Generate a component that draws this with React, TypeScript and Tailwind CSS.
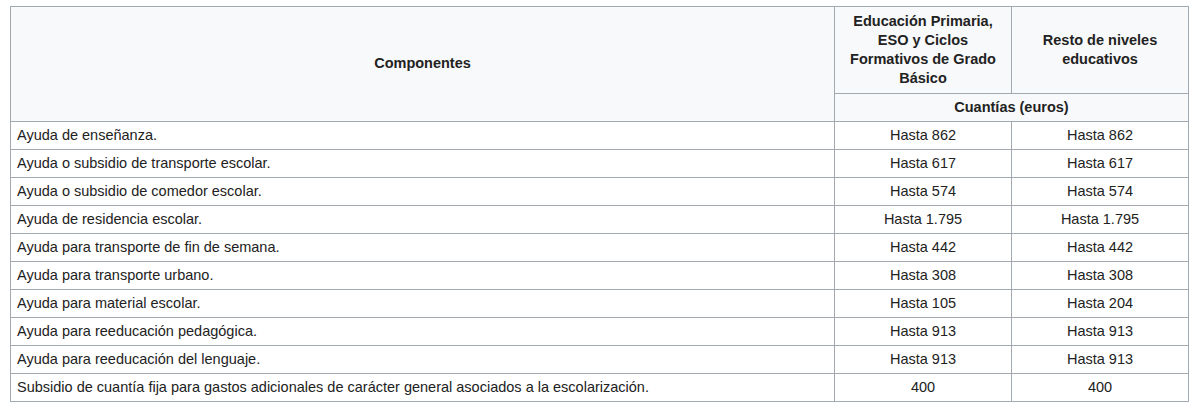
const rows: [string, string, string][] = [
  ["Ayuda de enseñanza.", "Hasta 862", "Hasta 862"],
  ["Ayuda o subsidio de transporte escolar.", "Hasta 617", "Hasta 617"],
  ["Ayuda o subsidio de comedor escolar.", "Hasta 574", "Hasta 574"],
  ["Ayuda de residencia escolar.", "Hasta 1.795", "Hasta 1.795"],
  ["Ayuda para transporte de fin de semana.", "Hasta 442", "Hasta 442"],
  ["Ayuda para transporte urbano.", "Hasta 308", "Hasta 308"],
  ["Ayuda para material escolar.", "Hasta 105", "Hasta 204"],
  ["Ayuda para reeducación pedagógica.", "Hasta 913", "Hasta 913"],
  ["Ayuda para reeducación del lenguaje.", "Hasta 913", "Hasta 913"],
  [
    "Subsidio de cuantía fija para gastos adicionales de carácter general asociados a la escolarización.",
    "400",
    "400",
  ],
];

export default function App() {
  return (
    <div className="w-[1200px] h-[414px] bg-white pt-[6px] pl-[10px] font-['Liberation_Sans',Arial,sans-serif] text-[14.5px] text-[#222]">
      <table className="w-[1178px] border-collapse border border-[#a2a9b1] table-fixed">
        <colgroup>
          <col className="w-[824px]" />
          <col className="w-[177px]" />
          <col className="w-[177px]" />
        </colgroup>
        <thead>
          <tr className="h-[87px]">
            <th
              rowSpan={2}
              className="border border-[#a2a9b1] bg-[#f8f9fa] font-bold text-center align-middle"
            >
              Componentes
            </th>
            <th className="border border-[#a2a9b1] bg-[#f8f9fa] font-bold text-center leading-[19px] px-[12px] py-[4px]">
              Educación Primaria, ESO y Ciclos Formativos de Grado Básico
            </th>
            <th className="border border-[#a2a9b1] bg-[#f8f9fa] font-bold text-center leading-[19px] px-[12px] py-[4px]">
              Resto de niveles educativos
            </th>
          </tr>
          <tr className="h-[28px]">
            <th
              colSpan={2}
              className="border border-[#a2a9b1] bg-[#f8f9fa] font-bold text-center leading-[19px] py-[4px]"
            >
              Cuantías (euros)
            </th>
          </tr>
        </thead>
        <tbody>
          {rows.map(([label, a, b]) => (
            <tr key={label} className="h-[28px]">
              <td className="border border-[#a2a9b1] px-[6px] py-[4px] leading-[19px] text-left">
                {label}
              </td>
              <td className="border border-[#a2a9b1] px-[6px] py-[4px] leading-[19px] text-center">
                {a}
              </td>
              <td className="border border-[#a2a9b1] px-[6px] py-[4px] leading-[19px] text-center">
                {b}
              </td>
            </tr>
          ))}
        </tbody>
      </table>
    </div>
  );
}
